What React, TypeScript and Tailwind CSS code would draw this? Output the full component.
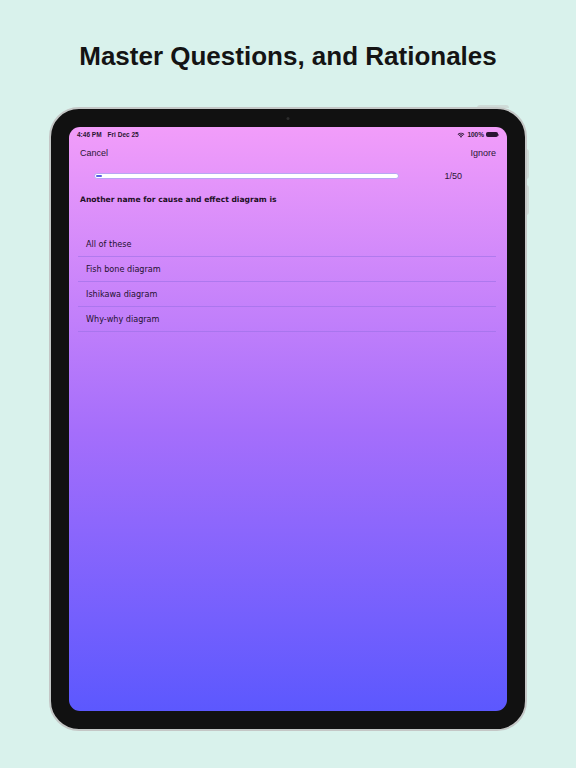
import { useState } from 'react';

const options = ['All of these', 'Fish bone diagram', 'Ishikawa diagram', 'Why-why diagram'];

function StatusBar() {
  return (
    <div className="flex h-[13px] items-center justify-between px-[8px] pt-[2px] font-['Liberation_Sans',Arial,sans-serif] text-[6.5px] font-bold text-[#2a1633]">
      <span>
        4:46 PM<span className="ml-[6px]">Fri Dec 25</span>
      </span>
      <span className="flex items-center gap-[2px]">
        <svg width="8" height="6" viewBox="0 0 16 12">
          <path d="M8 11.5 L5.6 9 A3.4 3.4 0 0 1 10.4 9 Z" fill="#2a1633" />
          <path d="M3.5 6.8 A6.4 6.4 0 0 1 12.5 6.8 L11.2 8.1 A4.6 4.6 0 0 0 4.8 8.1 Z" fill="#2a1633" />
          <path d="M1.2 4.5 A9.6 9.6 0 0 1 14.8 4.5 L13.5 5.8 A7.8 7.8 0 0 0 2.5 5.8 Z" fill="#2a1633" />
        </svg>
        <span>100%</span>
        <span className="flex items-center">
          <span className="h-[5px] w-[12px] rounded-[1.5px] border border-[#2a1633] bg-[#2a1633]" />
          <span className="h-[2px] w-[1px] rounded-r bg-[#2a1633]/60" />
        </span>
      </span>
    </div>
  );
}

export default function App() {
  const [selected, setSelected] = useState<number | null>(null);

  return (
    <div className="flex h-[768px] w-[576px] flex-col items-center overflow-hidden bg-[#d9f2ec]">
      <h1 className="mt-[37px] font-['Liberation_Sans',Arial,sans-serif] text-[26px] font-bold leading-[38px] text-[#141414]">
        Master Questions, and Rationales
      </h1>

      <div className="relative mt-[32px]">
        {/* side buttons */}
        <div className="absolute -top-[2px] right-[18px] h-[3px] w-[32px] rounded-t bg-[#cfdcd8]" />
        <div className="absolute -right-[2px] top-[42px] h-[30px] w-[3px] rounded-r bg-[#cfdcd8]" />
        <div className="absolute -right-[2px] top-[78px] h-[30px] w-[3px] rounded-r bg-[#cfdcd8]" />

        <div className="relative h-[624px] w-[478px] rounded-[30px] border-2 border-[#c4c7c6] bg-[#111111] p-[18px]">
          <div className="absolute left-1/2 top-[8px] h-[3px] w-[3px] -translate-x-1/2 rounded-full bg-[#2c2c2c]" />

          <div className="flex h-full w-full flex-col overflow-hidden rounded-[11px] bg-[linear-gradient(to_bottom,#f29dfa_0%,#a56efb_52%,#5c58fe_100%)]">
            <StatusBar />

            <div className="flex items-center justify-between px-[11px] pt-[7px] font-['Liberation_Sans',Arial,sans-serif] text-[9px] text-[#2b1636]">
              <button type="button">Cancel</button>
              <button type="button">Ignore</button>
            </div>

            <div className="mt-[9px] flex items-center pl-[25px] pr-[45px]">
              <div className="h-[6px] w-[305px] rounded-full border border-[#b9a4f3] bg-white p-[1px]">
                <div className="h-full w-[6px] rounded-full bg-[#5a5ee6]" />
              </div>
              <span className="ml-auto font-['Liberation_Sans',Arial,sans-serif] text-[9px] text-[#2b1636]">1/50</span>
            </div>

            <p className="mt-[11px] px-[11px] font-['DejaVu_Sans',Verdana,sans-serif] text-[7.6px] font-bold leading-[12px] text-[#1e1026]">
              Another name for cause and effect diagram is
            </p>

            <ul className="mt-[26px] pl-[9px] pr-[11px] font-['DejaVu_Sans',Verdana,sans-serif] text-[8.1px] text-[#24112f]">
              {options.map((o, i) => (
                <li
                  key={o}
                  onClick={() => setSelected(i)}
                  className={`flex h-[25px] items-center border-b border-[#9b6fe6]/60 pl-[8px] ${
                    selected === i ? 'bg-white/20' : ''
                  }`}
                >
                  {o}
                </li>
              ))}
            </ul>
          </div>
        </div>
      </div>
    </div>
  );
}
